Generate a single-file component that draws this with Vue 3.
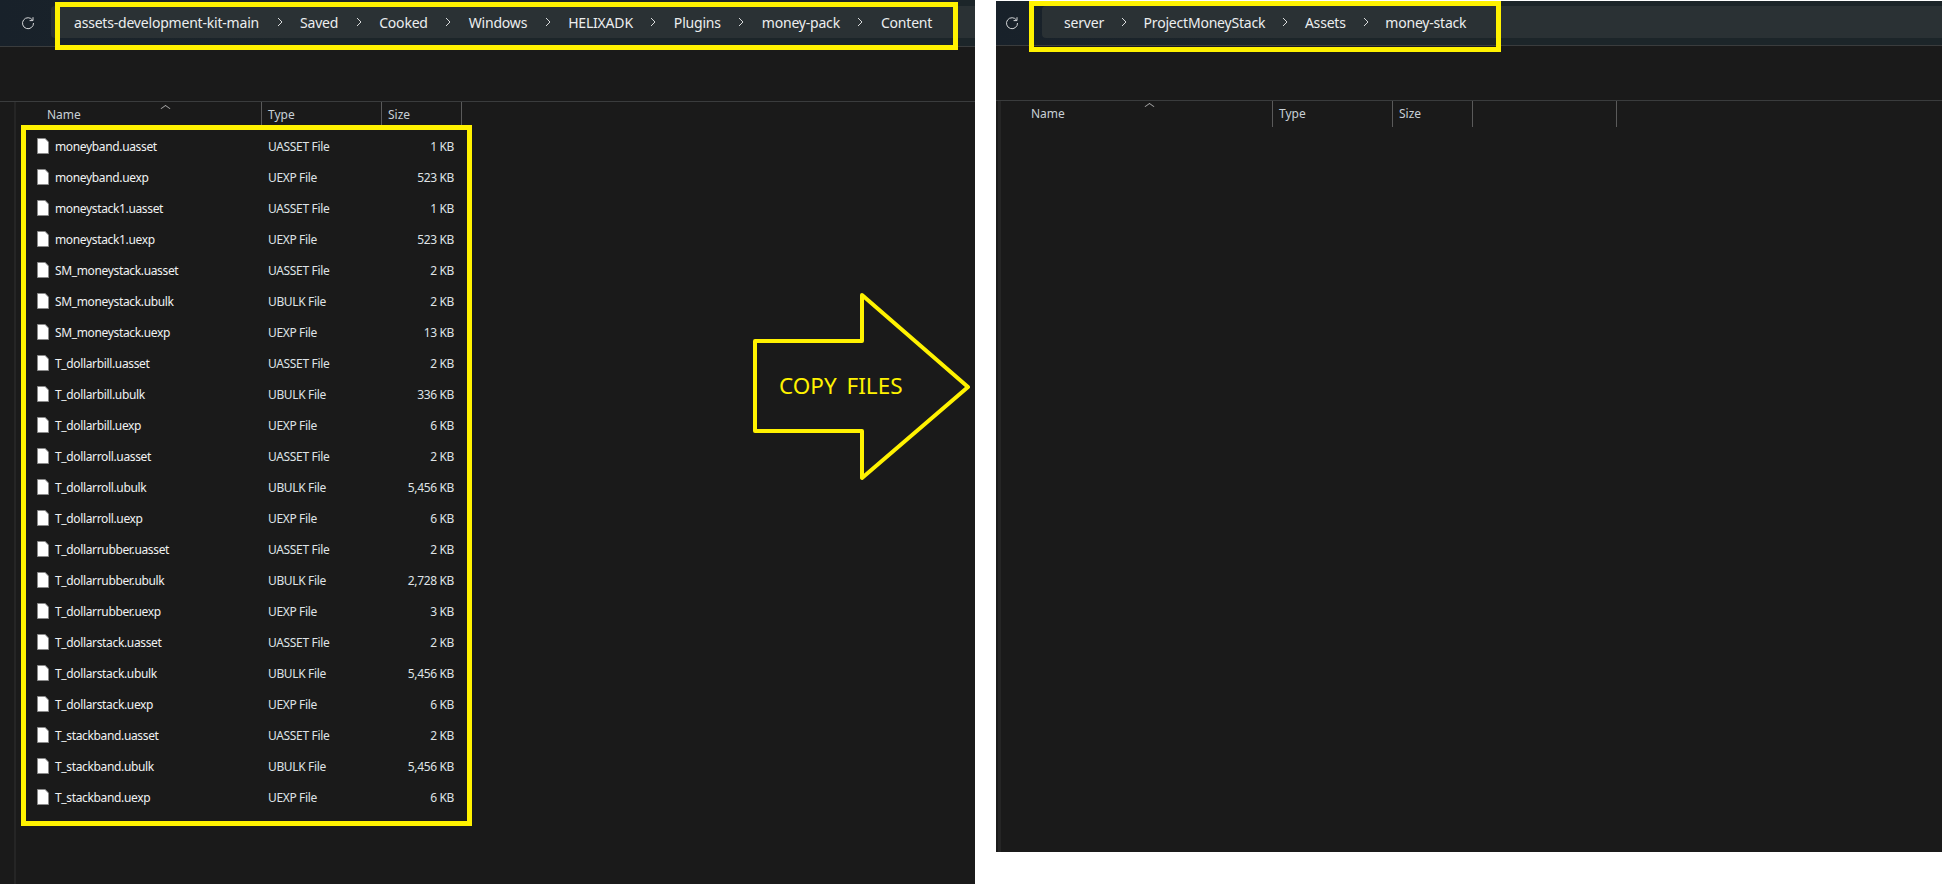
<template>
  <div class="page">
    <section v-for="win in windows" :key="win.id" class="win" :class="win.id">
      <div class="topbar">
        <svg class="refresh" width="14" height="14" viewBox="0 0 14 14" fill="none">
          <path d="M11.6 4.2A5.5 5.5 0 1 0 12.5 7" stroke="#d4d6d8" stroke-width="1" />
          <path d="M12 1.2V4.6H8.6" stroke="#d4d6d8" stroke-width="1" />
        </svg>
        <nav class="crumbs">
          <template v-for="(crumb, i) in win.crumbs" :key="crumb">
            <svg v-if="i" class="chev" width="6" height="10" viewBox="0 0 6 10" fill="none">
              <path d="M1 1l4 4-4 4" stroke="#d8dadb" stroke-width="1" />
            </svg>
            <span>{{ crumb }}</span>
          </template>
        </nav>
      </div>
      <div class="toolbar"></div>
      <div class="pane">
        <div class="head">
          <span class="caret"></span>
          <div class="col">Name</div>
          <div class="col">Type</div>
          <div class="col">Size</div>
          <div v-if="win.id === 'right'" class="col"></div>
        </div>
        <ul class="files">
          <li v-for="file in win.files" :key="file.name" class="file">
            <span class="file_name">
              <svg width="12" height="16" viewBox="0 0 12 16">
                <path d="M.5.5h7.6l3.4 3.4v11.6H.5z" fill="#fff" stroke="#8a8a8a" />
              </svg>
              {{ file.name }}
            </span>
            <span class="file_type">{{ file.type }}</span>
            <span class="file_size">{{ file.size }}</span>
          </li>
        </ul>
      </div>
      <div class="mark mark_path"></div>
      <div v-if="win.id === 'left'" class="mark mark_list"></div>
      <div v-if="win.id === 'left'" class="copy">
        <svg width="220" height="190" viewBox="0 0 220 190" fill="none">
          <path d="M2 48H109V2L215 94 109 185V138H2Z" stroke="#fff200" stroke-width="4" stroke-linejoin="round" />
        </svg>
        <span class="copy_label">COPY FILES</span>
      </div>
    </section>
  </div>
</template>

<script setup>
const typeNames = { uasset: "UASSET File", uexp: "UEXP File", ubulk: "UBULK File" };

const rows = [
  ["moneyband.uasset", "1 KB"],
  ["moneyband.uexp", "523 KB"],
  ["moneystack1.uasset", "1 KB"],
  ["moneystack1.uexp", "523 KB"],
  ["SM_moneystack.uasset", "2 KB"],
  ["SM_moneystack.ubulk", "2 KB"],
  ["SM_moneystack.uexp", "13 KB"],
  ["T_dollarbill.uasset", "2 KB"],
  ["T_dollarbill.ubulk", "336 KB"],
  ["T_dollarbill.uexp", "6 KB"],
  ["T_dollarroll.uasset", "2 KB"],
  ["T_dollarroll.ubulk", "5,456 KB"],
  ["T_dollarroll.uexp", "6 KB"],
  ["T_dollarrubber.uasset", "2 KB"],
  ["T_dollarrubber.ubulk", "2,728 KB"],
  ["T_dollarrubber.uexp", "3 KB"],
  ["T_dollarstack.uasset", "2 KB"],
  ["T_dollarstack.ubulk", "5,456 KB"],
  ["T_dollarstack.uexp", "6 KB"],
  ["T_stackband.uasset", "2 KB"],
  ["T_stackband.ubulk", "5,456 KB"],
  ["T_stackband.uexp", "6 KB"],
];

const windows = [
  {
    id: "left",
    crumbs: ["assets-development-kit-main", "Saved", "Cooked", "Windows", "HELIXADK", "Plugins", "money-pack", "Content"],
    files: rows.map(([name, size]) => ({ name, size, type: typeNames[name.split(".")[1]] })),
  },
  {
    id: "right",
    crumbs: ["server", "ProjectMoneyStack", "Assets", "money-stack"],
    files: [],
  },
];
</script>

<style scoped>
.page {
  display: flex;
  width: 1950px;
  height: 884px;
  overflow: hidden;
  background: #fff;
  font-family: "Noto Sans", "Open Sans", sans-serif;
}

.win {
  position: relative;
  display: flex;
  flex-direction: column;
  flex: none;
  background: #1a1a1a;
  color: #d9dde0;
}
.left { width: 975px; height: 884px; }
.right { width: 946px; height: 851px; margin: 1px 0 0 21px; }

.topbar {
  display: flex;
  align-items: flex-start;
  flex: none;
  height: 46px;
  background: linear-gradient(90deg, #18212a, #1c2529 30%);
  border-bottom: 1px solid #3a3c3d;
}
.right .topbar { height: 44px; }
.refresh { flex: none; margin-top: 16px; }
.left .refresh { margin-left: 21px; margin-right: 16px; }
.right .refresh { margin: 15px 23px 0 9px; }

.crumbs {
  flex: 1;
  display: flex;
  align-items: center;
  height: 32px;
  margin-top: 6px;
  background: #2a3134;
  border-radius: 4px 0 0 4px;
  color: #eceeef;
  font-size: 14px;
  letter-spacing: -0.2px;
  white-space: nowrap;
}
.left .crumbs { padding-left: 23px; }
.right .crumbs { padding-left: 22px; margin-top: 5px; }
.chev { flex: none; margin: 0 17.5px; }
.right .chev { margin: 0 16.8px; }

.toolbar {
  flex: none;
  height: 54px;
  border-bottom: 1px solid #3a3c3d;
}

.pane {
  position: relative;
  flex: 1;
  min-height: 0;
  border-left: 2px solid #252525;
}
.left .pane { margin-left: 14px; }
.right .pane { margin-left: 2px; border-left-width: 3px; }

.head {
  display: grid;
  height: 24px;
  font-size: 12px;
  line-height: 26px;
  color: #c8d0d6;
}
.right .head { height: 25px; }
.left .head { grid-template-columns: 246px 120px 80px; }
.right .head { grid-template-columns: 272px 120px 80px 144px; }
.col {
  padding-left: 6px;
  border-right: 1px solid #5a5a5a;
}
.col:first-of-type { padding-left: 31px; }
.right .col:first-of-type { padding-left: 30px; }
.caret {
  position: absolute;
  top: 3px;
  width: 6px;
  height: 6px;
  border-top: 1px solid #a8a8a8;
  border-left: 1px solid #a8a8a8;
  transform: scaleY(.7) rotate(45deg);
}
.left .caret { left: 146px; }
.right .caret { top: 2px; left: 145px; }

.files {
  margin: 0;
  padding: 5px 0 0;
  list-style: none;
}
.file {
  display: grid;
  grid-template-columns: 246px 119px 80px;
  align-items: center;
  height: 31px;
  font-size: 12px;
  letter-spacing: -0.35px;
  color: #dfe3e6;
}
.file_name {
  display: flex;
  align-items: center;
  gap: 6px;
  padding-left: 21px;
  color: #f0f2f3;
}
.file_name svg { margin-top: -1px; }
.file_type { padding-left: 6px; }
.file_size { padding-right: 7px; text-align: right; }

.mark {
  position: absolute;
  box-sizing: border-box;
  border: 5px solid #fff200;
}
.left .mark_path { left: 55px; top: 2px; width: 903px; height: 48px; }
.right .mark_path { left: 33px; top: 0; width: 472px; height: 51px; }
.mark_list { left: 21px; top: 125px; width: 451px; height: 701px; }

.copy {
  position: absolute;
  left: 753px;
  top: 293px;
  width: 220px;
  height: 190px;
}
.copy_label {
  position: absolute;
  left: 26px;
  top: 79px;
  color: #fff200;
  font-size: 22.5px;
  line-height: 28px;
  white-space: nowrap;
  word-spacing: 4px;
}
</style>
